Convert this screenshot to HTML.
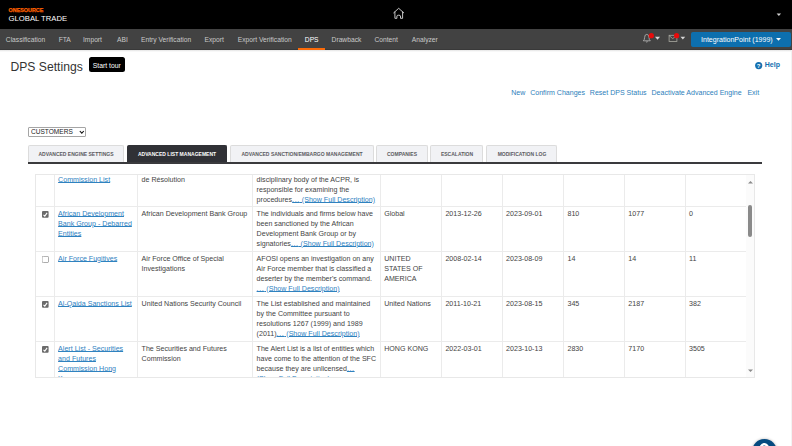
<!DOCTYPE html>
<html><head><meta charset="utf-8">
<style>
*{box-sizing:border-box}
html,body{margin:0;padding:0;width:792px;height:446px;overflow:hidden;background:#fff;font-family:"Liberation Sans",sans-serif;color:#333}
.abs{position:absolute;white-space:nowrap}
#hdr{position:absolute;left:0;top:0;width:792px;height:29px;background:#000}
#nav{position:absolute;left:0;top:29px;width:792px;height:21px;background:#424242;border-bottom:1px solid #393939}
#shadow{position:absolute;left:0;top:50px;width:792px;height:2px;background:linear-gradient(#e4e4e4,#fff)}
.nv{position:absolute;top:35px;font-size:6.7px;color:#c9c9c9;line-height:9px}
.lnk{position:absolute;top:88px;font-size:7.05px;color:#2e80bb;line-height:9px}
.tab{position:absolute;top:144.5px;height:18px;background:#f1f2f5;border:1px solid #dcdcdc;border-bottom:none;border-radius:2px 2px 0 0;font-size:6px;font-weight:bold;color:#5a5a5e;text-align:center;line-height:16px}
.tab span{position:absolute;left:50%;top:0;white-space:nowrap;transform:translateX(-50%) scaleX(0.836)}
.tab.act{background:#303136;border-color:#303136;color:#fff}
#grid{position:absolute;left:35px;top:174px;width:719.5px;height:203.5px;border:1px solid #e8e8e8;overflow:hidden;background:#fff}
table{border-collapse:collapse;position:absolute;left:-1.3px;top:-13.75px;font-size:7.1px;line-height:10px;table-layout:fixed}
td{border:1px solid #ebebeb;padding:2px 3.4px;color:#444;vertical-align:top;white-space:nowrap;overflow:hidden}
td:last-child{border-right:none}
.d{font-style:normal;letter-spacing:0.6px}
tr.r1 td{padding-top:3px;padding-bottom:1px}
td a{color:#2f82bf;text-decoration:underline;text-decoration-thickness:0.6px;text-underline-offset:0.4px}
.cb{display:block;margin:2.2px 0 0 3px}
</style></head><body>
<div id="hdr"></div>
<div class="abs" style="left:8.6px;top:6.5px;font-size:5.4px;font-weight:bold;color:#ff6200;-webkit-text-stroke:0.25px #ff6200;line-height:7px">ONESOURCE</div>
<div class="abs" style="left:8.6px;top:13.6px;font-size:7.7px;color:#fff;line-height:9px">GLOBAL TRADE</div>
<svg class="abs" style="left:385px;top:2px" width="30" height="24" viewBox="0 0 30 24"><path d="M8.7 10.8 L13.7 6.3 L18.7 10.8 M9.9 10 V16.3 H11.9 V14 Q11.9 13.2 13.7 13.2 Q15.5 13.2 15.5 14 V16.3 H17.6 V10" fill="none" stroke="#e6e6e6" stroke-width="0.85" stroke-linejoin="round" stroke-linecap="round"/></svg>
<svg class="abs" style="left:775px;top:12.4px" width="8" height="5"><path d="M1.6 1.4 L6.1 1.4 L3.85 4 Z" fill="#d0d0d0"/></svg>
<div id="nav"></div>
<div id="shadow"></div>
<div class="nv" style="left:5.8px">Classification</div>
<div class="nv" style="left:58.7px">FTA</div>
<div class="nv" style="left:83px">Import</div>
<div class="nv" style="left:117px">ABI</div>
<div class="nv" style="left:141px">Entry Verification</div>
<div class="nv" style="left:204.5px">Export</div>
<div class="nv" style="left:237.8px">Export Verification</div>
<div class="nv" style="left:304.8px;color:#fff">DPS</div>
<div class="abs" style="left:298.2px;top:48px;width:26.8px;height:2px;background:#fb6a08"></div>
<div class="nv" style="left:331.6px">Drawback</div>
<div class="nv" style="left:374.4px">Content</div>
<div class="nv" style="left:411.8px">Analyzer</div>
<!-- bell -->
<svg class="abs" style="left:641px;top:33px" width="46" height="11" viewBox="0 0 46 11">
<path d="M2.3 7.8 Q3.6 6.8 3.6 4.6 Q3.6 1.4 5.8 1.4 Q8 1.4 8 4.6 Q8 6.8 9.3 7.8 Z M4.9 8.6 Q5.8 9.6 6.7 8.6" fill="none" stroke="#b8b8b8" stroke-width="0.8" stroke-linejoin="round"/>
<circle cx="10.3" cy="2.7" r="2.6" fill="#e80b0b"/>
<path d="M14 3.7 L19 3.7 L16.5 6.7 Z" fill="#d8d8d8"/>
<rect x="28.1" y="2.3" width="7.8" height="6.2" fill="none" stroke="#a8a8a0" stroke-width="0.8"/>
<path d="M28.1 2.6 L31.6 5.6 L35.9 2.6" fill="none" stroke="#a8a8a0" stroke-width="0.8"/>
<circle cx="35.6" cy="2.7" r="2.6" fill="#e80b0b"/>
<path d="M39.5 3.8 L44.2 3.8 L41.85 6.6 Z" fill="#d8d8d8"/>
</svg>
<div class="abs" style="left:690.8px;top:32.2px;width:100px;height:14.4px;background:#0d6fae;border-radius:2px"></div>
<div class="abs" style="left:701px;top:35px;font-size:7.05px;color:#fff;line-height:9px">IntegrationPoint (1999)</div>
<svg class="abs" style="left:775px;top:37.2px" width="8" height="5"><path d="M1 1 L6 1 L3.5 3.8 Z" fill="#fff"/></svg>

<div class="abs" style="left:10.5px;top:59px;font-size:12.15px;color:#333;line-height:16px">DPS Settings</div>
<div class="abs" style="left:88.7px;top:57.3px;width:36.2px;height:14.8px;background:#000;border-radius:2.5px"></div>
<div class="abs" style="left:92.8px;top:60.5px;font-size:6.8px;color:#fff;line-height:9px">Start tour</div>

<svg class="abs" style="left:754.5px;top:62.3px" width="8" height="8" viewBox="0 0 8 8"><circle cx="3.7" cy="3.6" r="3.6" fill="#1570b0"/><text x="3.7" y="6" font-size="6" font-weight="bold" text-anchor="middle" fill="#fff" font-family="Liberation Sans">?</text></svg>
<div class="abs" style="left:764.8px;top:59.9px;font-size:7px;font-weight:bold;color:#1570b0;line-height:10px">Help</div>

<div class="lnk" style="left:511.2px">New</div>
<div class="lnk" style="left:530.2px">Confirm Changes</div>
<div class="lnk" style="left:589.8px">Reset DPS Status</div>
<div class="lnk" style="left:651.5px">Deactivate Advanced Engine</div>
<div class="lnk" style="left:747.4px">Exit</div>

<div class="abs" style="left:28.2px;top:127px;width:58.1px;height:9.8px;border:0.8px solid #a5a5a5;border-radius:1px;background:#fff"></div>
<div class="abs" style="left:30.7px;top:127.2px;font-size:6.95px;color:#222;line-height:9px;transform:scaleX(0.945);transform-origin:0 0">CUSTOMERS</div>
<svg class="abs" style="left:79px;top:130px" width="6" height="5"><path d="M0.8 1 L2.8 3.2 L4.8 1" fill="none" stroke="#111" stroke-width="1.1"/></svg>

<div class="tab" style="left:28.2px;width:95.5px"><span>ADVANCED ENGINE SETTINGS</span></div>
<div class="tab act" style="left:127px;width:99.5px"><span>ADVANCED LIST MANAGEMENT</span></div>
<div class="tab" style="left:229.5px;width:144.2px"><span>ADVANCED SANCTION/EMBARGO MANAGEMENT</span></div>
<div class="tab" style="left:376.3px;width:51.3px"><span>COMPANIES</span></div>
<div class="tab" style="left:430.1px;width:53px"><span>ESCALATION</span></div>
<div class="tab" style="left:486.2px;width:70.7px"><span>MODIFICATION LOG</span></div>
<div class="abs" style="left:28px;top:162px;width:734px;height:2px;background:#3a3a3d"></div>

<div id="grid">
<table>
<colgroup><col style="width:19px"><col style="width:83.5px"><col style="width:115px"><col style="width:127.6px"><col style="width:61.2px"><col style="width:60.7px"><col style="width:61.4px"><col style="width:60.9px"><col style="width:60.7px"><col style="width:60.6px"></colgroup>
<tr class="r1"><td></td><td><a>ACPR - Disciplinary</a><br><a>Commission List</a></td><td>Prudentiel et<br>de Résolution</td><td>The Disciplinary Commission, the<br>disciplinary body of the ACPR, is<br>responsible for examining the<br>procedures<a><i class="d">...</i> (Show Full Description)</a></td><td>FRANCE</td><td>2019-01-01</td><td>2023-09-01</td><td>12</td><td>12</td><td>0</td></tr>
<tr><td><svg class="cb" width="7" height="7" viewBox="0 0 7 7"><rect x="0" y="0" width="6.6" height="6.8" rx="1" fill="#6b6b6b"/><path d="M1.5 3.9 L2.8 5.1 L5.1 1.9" fill="none" stroke="#fff" stroke-width="1.1"/></svg></td><td><a>African Development</a><br><a>Bank Group - Debarred</a><br><a>Entities</a></td><td>African Development Bank Group</td><td>The individuals and firms below have<br>been sanctioned by the African<br>Development Bank Group or by<br>signatories<a><i class="d">...</i> (Show Full Description)</a></td><td>Global</td><td>2013-12-26</td><td>2023-09-01</td><td>810</td><td>1077</td><td>0</td></tr>
<tr><td><svg class="cb" width="7" height="7" viewBox="0 0 7 7"><rect x="0" y="0.3" width="6.6" height="6.3" rx="1.4" fill="#fff" stroke="#999" stroke-width="0.9"/></svg></td><td><a>Air Force Fugitives</a></td><td>Air Force Office of Special<br>Investigations</td><td>AFOSI opens an investigation on any<br>Air Force member that is classified a<br>deserter by the member's command.<br><a><i class="d">...</i> (Show Full Description)</a></td><td>UNITED<br>STATES OF<br>AMERICA</td><td>2008-02-14</td><td>2023-08-09</td><td>14</td><td>14</td><td>11</td></tr>
<tr><td><svg class="cb" width="7" height="7" viewBox="0 0 7 7"><rect x="0" y="0" width="6.6" height="6.8" rx="1" fill="#6b6b6b"/><path d="M1.5 3.9 L2.8 5.1 L5.1 1.9" fill="none" stroke="#fff" stroke-width="1.1"/></svg></td><td><a>Al-Qaida Sanctions List</a></td><td>United Nations Security Council</td><td>The List established and maintained<br>by the Committee pursuant to<br>resolutions 1267 (1999) and 1989<br>(2011)<a><i class="d">...</i> (Show Full Description)</a></td><td>United Nations</td><td>2011-10-21</td><td>2023-08-15</td><td>345</td><td>2187</td><td>382</td></tr>
<tr><td><svg class="cb" width="7" height="7" viewBox="0 0 7 7"><rect x="0" y="0" width="6.6" height="6.8" rx="1" fill="#6b6b6b"/><path d="M1.5 3.9 L2.8 5.1 L5.1 1.9" fill="none" stroke="#fff" stroke-width="1.1"/></svg></td><td><a>Alert List - Securities</a><br><a>and Futures</a><br><a>Commission Hong</a><br><a>Kong</a></td><td>The Securities and Futures<br>Commission</td><td>The Alert List is a list of entities which<br>have come to the attention of the SFC<br>because they are unlicensed<a><i class="d">...</i></a><br><a>(Show Full Description)</a></td><td>HONG KONG</td><td>2022-03-01</td><td>2023-10-13</td><td>2830</td><td>7170</td><td>3505</td></tr>
</table>
<div style="position:absolute;left:710.3px;top:0;width:8.5px;height:203px;background:#fbfbfb"></div>
<svg style="position:absolute;left:710.7px;top:4.6px" width="7" height="4"><path d="M1 3.5 L6 3.5 L3.5 1 Z" fill="#8a8a8a"/></svg>
<div style="position:absolute;left:711.9px;top:30px;width:4.5px;height:32px;background:#8a8a8a;border-radius:2.2px"></div>
<svg style="position:absolute;left:710.7px;top:193.8px" width="7" height="4"><path d="M1 0.5 L6 0.5 L3.5 3 Z" fill="#8a8a8a"/></svg>
</div>

<div class="abs" style="left:751.8px;top:438.6px;width:25.4px;height:25.4px;border-radius:50%;background:#054a80;box-shadow:0 0 3px rgba(0,0,0,0.3)"></div>
<svg class="abs" style="left:752px;top:439px" width="26" height="8" viewBox="0 0 26 8"><path d="M9.2 10 A3.4 3.4 0 1 1 15.6 9.5" fill="none" stroke="#fff" stroke-width="2.4"/></svg>
<div class="abs" style="left:791px;top:50px;width:1px;height:396px;background:#f3f3f3"></div>
</body></html>
